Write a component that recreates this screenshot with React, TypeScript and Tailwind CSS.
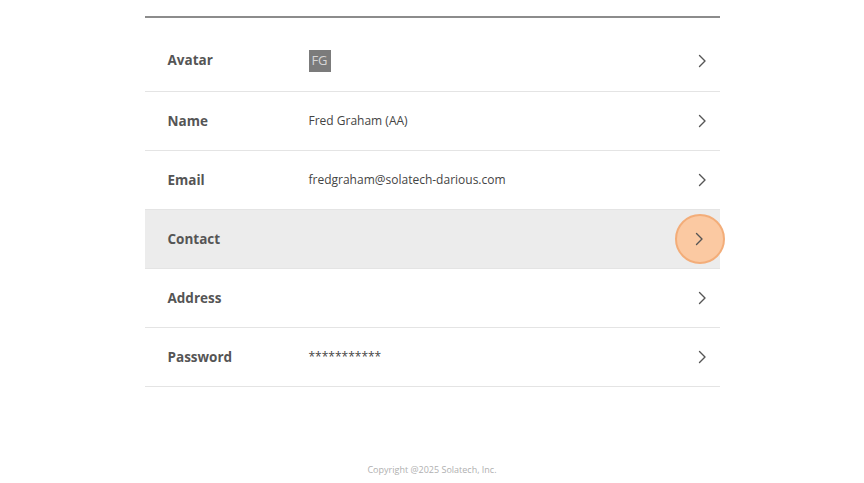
import { ReactNode } from 'react';

interface ProfileRow {
  key: string;
  label: string;
  value?: ReactNode;
  active?: boolean;
  tall?: boolean;
}

function Chevron() {
  return (
    <svg width="9" height="14" viewBox="0 0 9 14" fill="none" className="text-[#555]">
      <path d="M1.5 1.5 L7 7 L1.5 12.5" stroke="currentColor" strokeWidth="1.4" strokeLinecap="round" strokeLinejoin="round" />
    </svg>
  );
}

const rows: ProfileRow[] = [
  {
    key: 'avatar',
    label: 'Avatar',
    tall: true,
    value: (
      <span className="flex items-center justify-center w-[22px] h-[22px] bg-[#7b7b7b] text-[#d6d6d6] text-[13px] leading-none">
        FG
      </span>
    ),
  },
  { key: 'name', label: 'Name', value: 'Fred Graham (AA)' },
  { key: 'email', label: 'Email', value: 'fredgraham@solatech-darious.com' },
  { key: 'contact', label: 'Contact', active: true },
  { key: 'address', label: 'Address' },
  { key: 'password', label: 'Password', value: '***********' },
];

export default function App() {
  return (
    <div className="w-[864px] h-[483px] bg-white flex flex-col items-center font-['Open_Sans',_'Noto_Sans',_sans-serif] overflow-hidden">
      <div className="h-[16px] w-full" />
      <div className="w-[575px] border-t-2 border-[#8c8c8c]">
        {rows.map(row => (
          <div
            key={row.key}
            className={`relative flex items-center border-b border-[#e4e4e4] ${row.tall ? 'h-[74px] pt-[12px]' : 'h-[59px]'} ${row.active ? 'bg-[#ececec]' : 'bg-white'}`}
          >
            <div className="w-[164px] pl-[23px] text-[13.5px] font-bold text-[#555]">{row.label}</div>
            <div className="flex-1 text-[12px] text-[#444]">{row.value}</div>
            <div className="w-[34px] flex items-center justify-center">
              {row.active ? (
                <span className="absolute right-[-5px] top-1/2 -translate-y-1/2 w-[50px] h-[50px] rounded-full bg-[#fbc9a2] border-2 border-[#f3ad79] flex items-center justify-center">
                  <Chevron />
                </span>
              ) : (
                <Chevron />
              )}
            </div>
          </div>
        ))}
      </div>
      <div className="mt-[76px] text-[9px] text-[#b0b0b0]">Copyright @2025 Solatech, Inc.</div>
    </div>
  );
}
